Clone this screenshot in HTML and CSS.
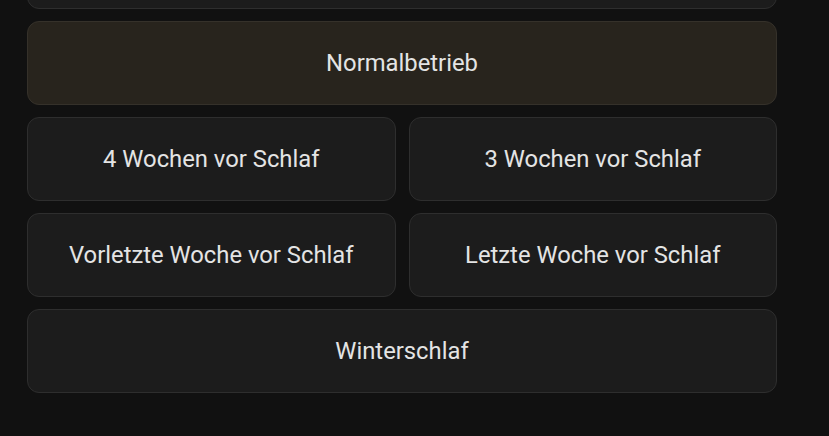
FILE: index.html
```html
<!DOCTYPE html>
<html lang="de">
<head>
  <meta charset="UTF-8">
  <meta name="viewport" content="width=device-width, initial-scale=1.0">
  <title>Betriebsmodus</title>
  <link rel="stylesheet" href="styles.css">
</head>
<body>
  <div class="modes">
    <button class="mode wide" aria-label="Sommerbetrieb"></button>
    <button class="mode wide active">Normalbetrieb</button>
    <button class="mode">4 Wochen vor Schlaf</button>
    <button class="mode">3 Wochen vor Schlaf</button>
    <button class="mode">Vorletzte Woche vor Schlaf</button>
    <button class="mode">Letzte Woche vor Schlaf</button>
    <button class="mode wide">Winterschlaf</button>
  </div>
</body>
</html>
```

FILE: styles.css
```css
html, body {
  margin: 0;
  height: 100%;
  background-color: #111111;
  overflow: hidden;
}
body {
  font-family: Roboto, "Noto Sans", sans-serif;
}
.modes {
  display: grid;
  grid-template-columns: 1fr 1fr;
  gap: 12px 13px;
  width: 750px;
  margin: -75px 0 0 27px;
}
.mode {
  height: 84px;
  padding: 0 8px;
  font-family: inherit;
  font-size: 23.8px;
  color: #e4e4e4;
  background-color: #1c1c1c;
  border: 1px solid #2e2e2e;
  border-radius: 12px;
  cursor: pointer;
}
.mode.wide {
  grid-column: span 2;
}
.mode.active {
  background-color: #28241d;
  border-color: #35312a;
}
.mode:hover {
  background-color: #222222;
}
```
